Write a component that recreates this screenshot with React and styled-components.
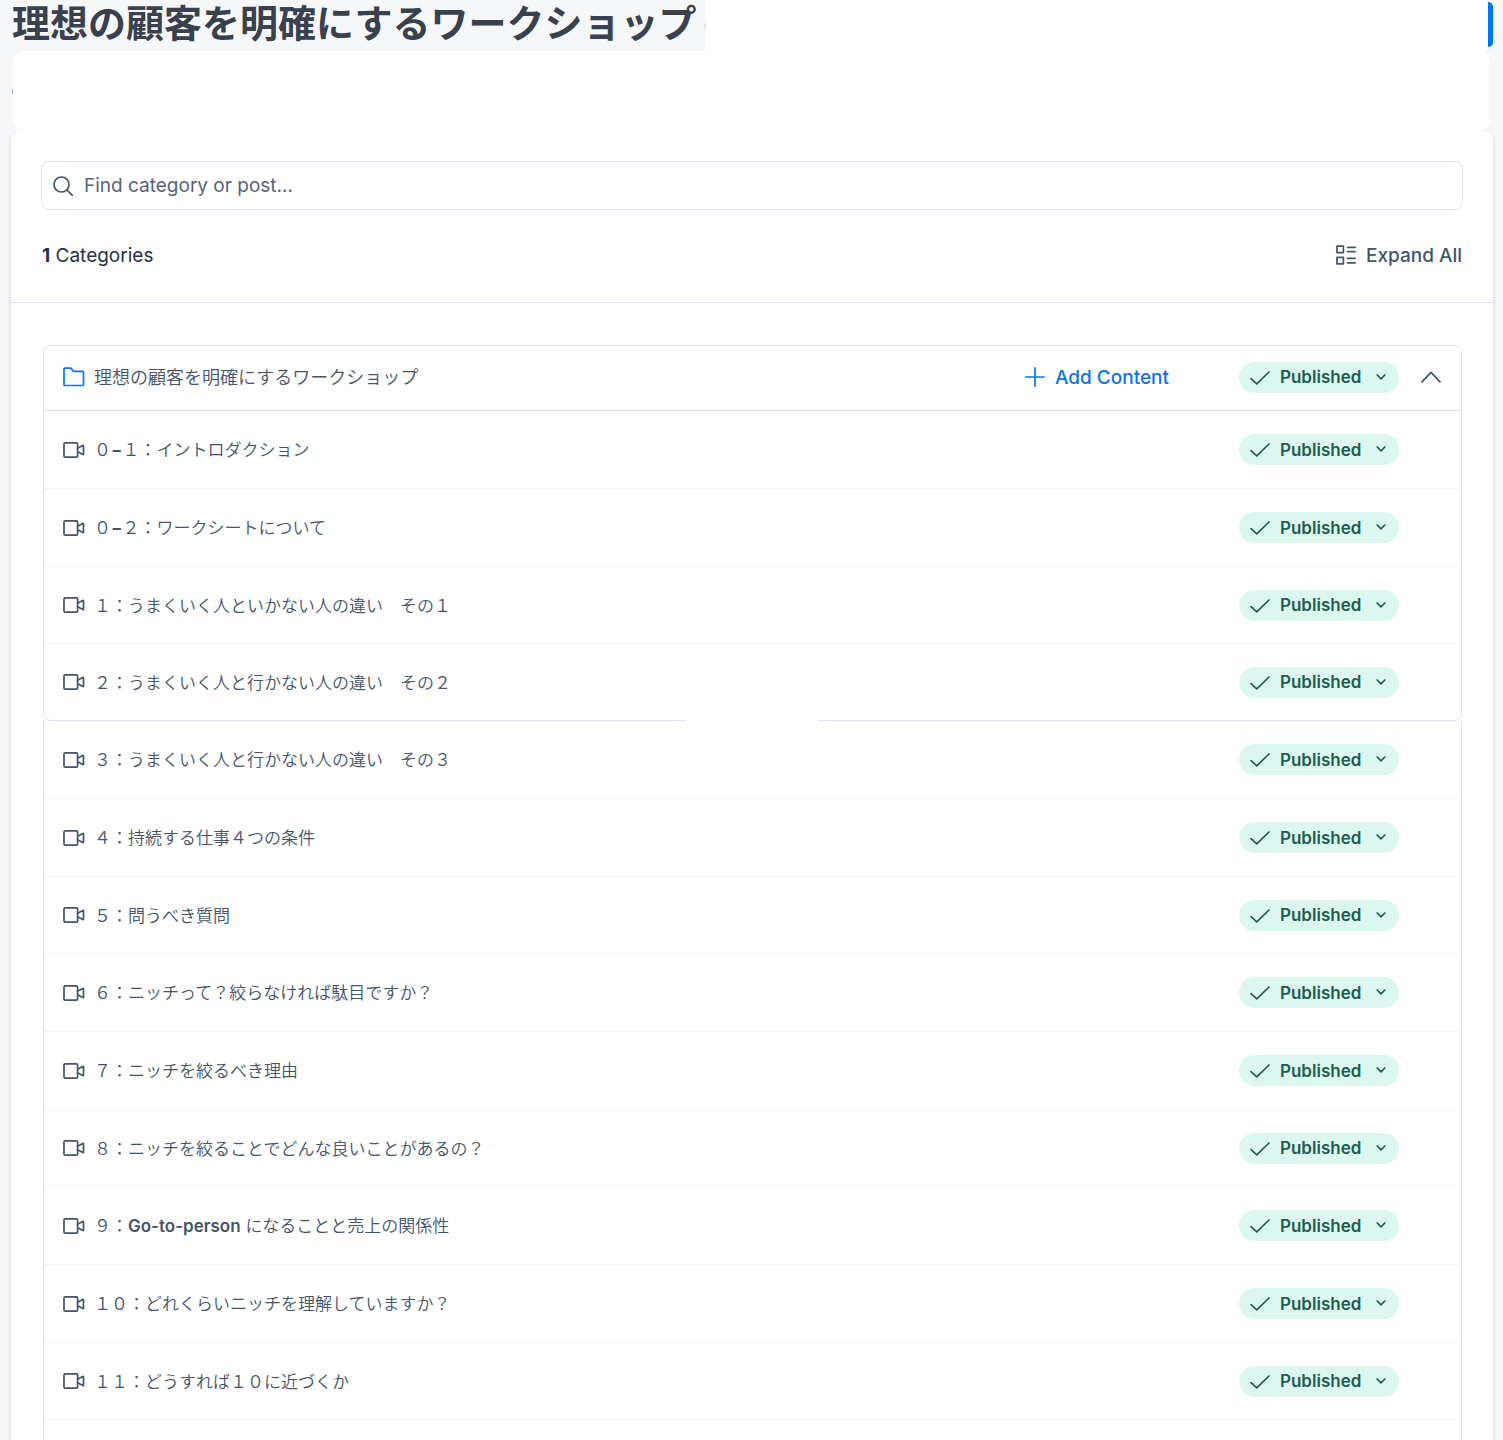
import React, { useState } from "react";
import styled, { createGlobalStyle } from "styled-components";

const firstPosts = [
  "０−１：イントロダクション",
  "０−２：ワークシートについて",
  "１：うまくいく人といかない人の違い　その１",
  "２：うまくいく人と行かない人の違い　その２",
];

const morePosts = [
  "３：うまくいく人と行かない人の違い　その３",
  "４：持続する仕事４つの条件",
  "５：問うべき質問",
  "６：ニッチって？絞らなければ駄目ですか？",
  "７：ニッチを絞るべき理由",
  "８：ニッチを絞ることでどんな良いことがあるの？",
  "９：Go-to-person になることと売上の関係性",
  "１０：どれくらいニッチを理解していますか？",
  "１１：どうすれば１０に近づくか",
];

const SearchIcon = () => (
  <Icon width="20" height="20" viewBox="0 0 20 20">
    <circle cx="8.5" cy="8.5" r="7.5" />
    <path d="M14 14l5.3 5.3" />
  </Icon>
);

const ExpandIcon = () => (
  <Icon width="20" height="20" viewBox="0 0 20 20">
    <path d="M1 1.2h6.4v6.4H1zM1 12.4h6.4v6.4H1zM11.5 2.3H19.2M11.5 6.7H19.2M11.5 13.4H19.2M11.5 17.8H19.2" />
  </Icon>
);

const FolderIcon = () => (
  <Icon width="22" height="20" viewBox="0 0 22 20" $color="#0a74f0">
    <path d="M1 17.6V2q0-.9.9-.9h5.5q.6 0 .9.5l1.9 2.7h9.5q.8 0 .8.8v12.5q0 .9-.9.9H1.9q-.9 0-.9-.9z" />
  </Icon>
);

const VideoIcon = () => (
  <Icon width="22" height="16" viewBox="0 0 22 16">
    <rect x="1" y=".9" width="13.6" height="14.2" rx="1.2" />
    <path d="M14.6 6.2l5.2-2.7q.7-.2.7.5v8q0 .7-.7.5l-5.2-2.7" />
  </Icon>
);

const PlusIcon = () => (
  <Icon width="20" height="20" viewBox="0 0 20 20" $color="#0a74f0">
    <path d="M10 .9v18.2M.9 10h18.2" />
  </Icon>
);

const ChevronIcon = () => (
  <Icon width="20" height="12" viewBox="0 0 20 12">
    <path d="M1 10.8L10 1.4l9 9.4" />
  </Icon>
);

const Status = ({ label }) => {
  const [value, setValue] = useState("Published");
  return (
    <StatusWrap>
      <CheckMark width="20" height="14" viewBox="0 0 20 14" $color="#1f5c50">
        <path d="M1 7.6l5.8 5.2L19 1" />
      </CheckMark>
      <StatusSelect
        aria-label={label}
        value={value}
        onChange={(e) => setValue(e.target.value)}
      >
        <option>Published</option>
        <option>Draft</option>
      </StatusSelect>
      <Caret width="10" height="6" viewBox="0 0 10 6" $color="#1f5c50">
        <path d="M1.2 1l3.8 3.8L8.8 1" />
      </Caret>
    </StatusWrap>
  );
};

// latin runs are set heavier than the japanese text
const Post = ({ title }) => (
  <Row>
    <VideoIcon />
    <PostTitle>
      {title
        .split(/([A-Za-z−-]+)/)
        .map((part, i) => (i % 2 ? <Latin key={i}>{part}</Latin> : part))}
    </PostTitle>
    <Status label={"Status " + title} />
  </Row>
);

const App = () => {
  return (
    <>
      <GlobalStyle />
      <Header>
        <Title>理想の顧客を明確にするワークショップ</Title>
        <HeaderBlank />
        <HeaderButton aria-label="Save" />
      </Header>
      <Banner />
      <Card>
        <Tools>
          <SearchBox>
            <SearchIcon />
            <SearchInput
              type="text"
              aria-label="Find category or post"
              placeholder="Find category or post..."
            />
          </SearchBox>
          <Summary>
            <Count>
              <b>1</b> Categories
            </Count>
            <TextButton>
              <ExpandIcon />
              Expand All
            </TextButton>
          </Summary>
        </Tools>
        <Outline>
          <Category>
            <CategoryHead>
              <FolderIcon />
              <CategoryTitle>理想の顧客を明確にするワークショップ</CategoryTitle>
              <AddButton>
                <PlusIcon />
                Add Content
              </AddButton>
              <Status label="Category status" />
              <CollapseButton aria-label="Collapse">
                <ChevronIcon />
              </CollapseButton>
            </CategoryHead>
            <Posts>
              {firstPosts.map((title) => (
                <Post key={title} title={title} />
              ))}
            </Posts>
          </Category>
          <MorePosts>
            {morePosts.map((title) => (
              <Post key={title} title={title} />
            ))}
          </MorePosts>
        </Outline>
      </Card>
    </>
  );
};

export default App;

const GlobalStyle = createGlobalStyle`
  * {
    box-sizing: border-box;
  }
  body {
    margin: 0;
    background: #f6f7f9;
    color: #44546a;
    font-family: Inter, "Noto Sans CJK JP", sans-serif;
    font-size: 18px;
  }
  button, input, select {
    font-family: inherit;
    font-size: inherit;
    color: inherit;
    background: none;
    border: 0;
    padding: 0;
    margin: 0;
  }
  button, select {
    cursor: pointer;
  }
`;

const Icon = styled.svg`
  display: block;
  flex: none;
  fill: none;
  stroke: ${(p) => p.$color || "#44546a"};
  stroke-width: 1.7;
  stroke-linecap: round;
  stroke-linejoin: round;
`;

const Header = styled.header`
  display: flex;
  align-items: stretch;
  padding-left: 12px;
  padding-right: 10px;
`;

const Title = styled.h1`
  margin: 0;
  padding: 0 9px 5px 0;
  color: #38414d;
  font-size: 38px;
  line-height: 46px;
  font-weight: 700;
`;

const HeaderBlank = styled.div`
  position: relative;
  flex: 1;
  background: #fff;

  &::before {
    content: "";
    position: absolute;
    left: -1px;
    top: 23px;
    width: 2px;
    height: 6px;
    background: #dfe2e7;
    border-radius: 1px;
  }
`;

const HeaderButton = styled.button`
  width: 5px;
  margin: 2px 0 4px;
  background: #0072ef;
  border-radius: 0 5px 5px 0;
  box-shadow: 0 1px 3px rgba(30, 40, 60, 0.2);
`;

const Banner = styled.div`
  position: relative;
  height: 80px;
  margin: 0 13px;
  background: #fff;
  border-radius: 12px;

  /* tail of the breadcrumb that sticks out of the banner */
  &::before {
    content: "";
    position: absolute;
    left: -1px;
    top: 38px;
    width: 1px;
    height: 5px;
    background: #a9b1bd;
  }
`;

const Card = styled.main`
  margin: 0 10px 0 11px;
  background: #fff;
  border-radius: 8px 8px 0 0;
  box-shadow: 0 2px 4px rgba(30, 40, 60, 0.2);
`;

const Tools = styled.section`
  padding: 30px 30px 33px;
  border-bottom: 1px solid #dbe2f1;
`;

const SearchBox = styled.div`
  display: flex;
  align-items: center;
  gap: 11px;
  height: 49px;
  padding: 0 11px;
  border: 1px solid #dbe2f1;
  border-radius: 8px;
`;

const SearchInput = styled.input`
  flex: 1;
  height: 100%;
  outline: none;
  font-size: 19px;

  &::placeholder {
    color: #53647b;
    opacity: 1;
  }
`;

const Summary = styled.div`
  display: flex;
  justify-content: space-between;
  align-items: center;
  margin-top: 31px;
`;

const Count = styled.div`
  padding: 2px 0 0 1px;
  color: #243244;
  font-size: 19px;
  line-height: 26px;
`;

const TextButton = styled.button`
  display: flex;
  align-items: center;
  gap: 10px;
  padding-right: 1px;
  font-size: 19px;
  font-weight: 500;
`;

const Outline = styled.section`
  padding: 42px 31px 0 32px;
`;

const Category = styled.section`
  position: relative;
  border: 1px solid #dbe2f1;
  border-radius: 8px;

  /* break in the bottom line */
  &::after {
    content: "";
    position: absolute;
    left: 50%;
    bottom: -1px;
    width: 132px;
    height: 1px;
    margin-left: -67px;
    background: #fff;
  }
`;

const CategoryHead = styled.div`
  display: flex;
  align-items: center;
  min-height: 65px;
  padding: 0 20px 2px 19px;
  border-bottom: 1px solid #dbe2f1;
`;

const CategoryTitle = styled.h2`
  flex: 1;
  margin: 0 0 0 9px;
  padding-bottom: 2px;
  font-size: 18px;
  font-weight: 350;
`;

const AddButton = styled(TextButton)`
  padding: 0;
  margin-right: 70px;
  color: #0a74f0;
`;

const CollapseButton = styled.button`
  padding-left: 22px;
`;

const Posts = styled.ul`
  margin: 0;
  padding: 0;
  list-style: none;
`;

const Row = styled.li`
  display: flex;
  align-items: center;
  min-height: 78px;
  padding: 0 62px 0 19px;
  border-bottom: 1px solid #f1f5f8;

  &:nth-child(3n) {
    min-height: 77px;
  }
  ${Category} &:last-child {
    border-bottom: 0;
    min-height: 76px;
  }
`;

const MorePosts = styled(Posts)`
  padding-bottom: 20px;
  border: 1px solid #dbe2f1;
  border-width: 0 1px;
`;

const PostTitle = styled.span`
  flex: 1;
  margin-left: 9px;
  padding-bottom: 2px;
  font-size: 17px;
  font-weight: 350;
`;

const Latin = styled.span`
  font-weight: 600;
`;

const StatusWrap = styled.div`
  position: relative;
  flex: none;
`;

const StatusSelect = styled.select`
  appearance: none;
  display: block;
  width: 160px;
  height: 31px;
  padding-left: 41px;
  background: #dcf7ef;
  border-radius: 16px;
  color: #1f5c50;
  font-size: 17px;
  font-weight: 600;
`;

const CheckMark = styled(Icon)`
  position: absolute;
  left: 11px;
  top: 9px;
  pointer-events: none;
`;

const Caret = styled(Icon)`
  position: absolute;
  right: 13px;
  top: 12px;
  pointer-events: none;
`;
